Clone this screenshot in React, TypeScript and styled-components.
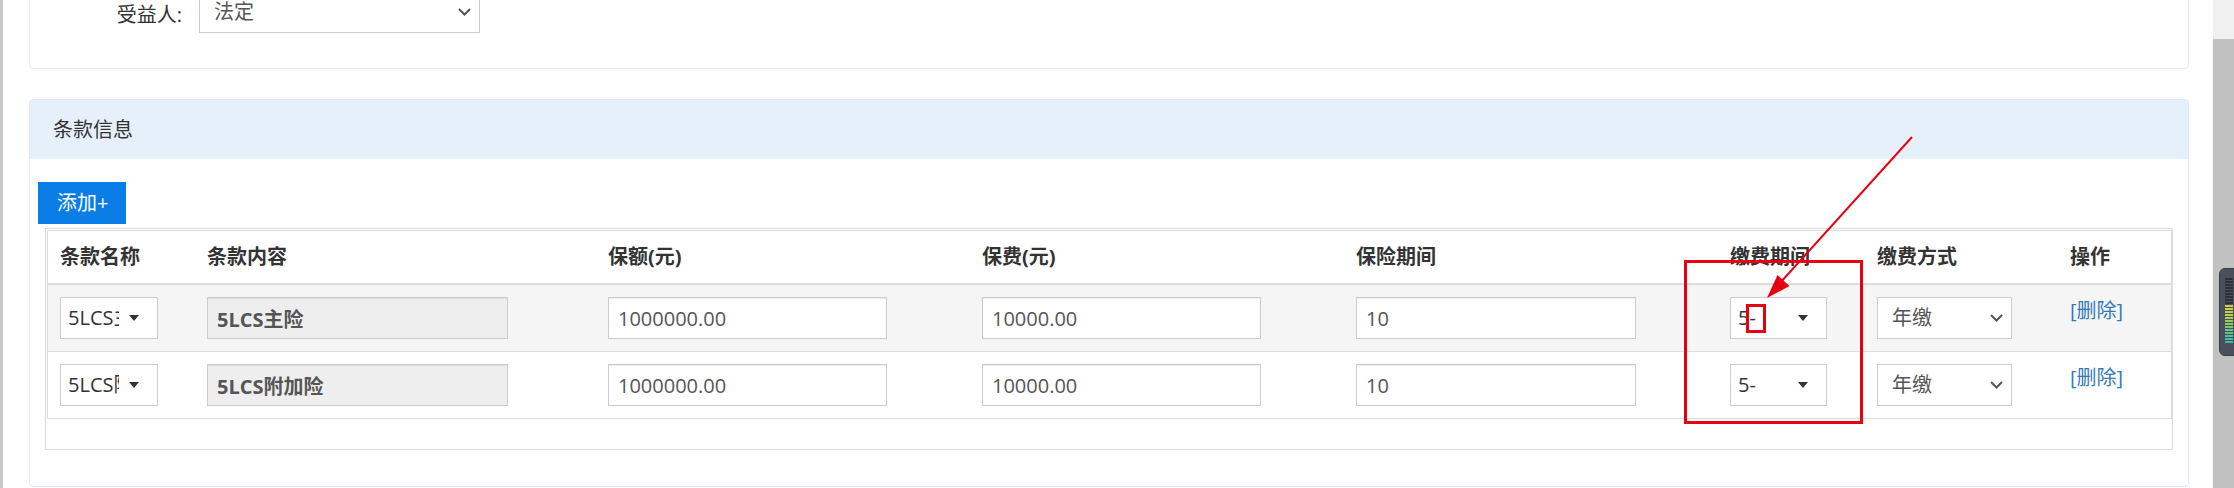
import React from 'react'
import styled, { createGlobalStyle } from 'styled-components'

const GlobalStyle = createGlobalStyle`
  html, body { margin: 0; padding: 0; background: #fff; }
  body {
    font-family: "Open Sans", "Noto Sans CJK SC", sans-serif;
    font-size: 20px;
    line-height: 28px;
    color: #333;
  }
  * { box-sizing: border-box; }
`

const Screen = styled.div`
  position: relative;
  display: flex;
  width: 2234px;
  height: 488px;
  overflow: hidden;
  background: #fff;
`

const LeftEdge = styled.div`
  flex: 0 0 3px;
  background: #c8c8c8;
`

const Main = styled.main`
  flex: 1;
  display: flex;
  flex-direction: column;
  gap: 30px;
  padding: 0 24px 0 26px;
`

const Card = styled.section`
  border: 1px solid #e1ebf6;
  border-radius: 4px;
  background: #fff;
`

const FilterCard = styled(Card)`
  margin-top: -20px;
  padding: 10px 0 35px;
`

const FormRow = styled.div`
  display: flex;
  align-items: center;
`

const FormLabel = styled.label`
  width: 152px;
  margin-right: 17px;
  padding-top: 6px;
  text-align: right;
`

const SelectBox = styled.div<{ $w: number }>`
  display: flex;
  align-items: center;
  width: ${(p) => p.$w}px;
  height: 42px;
  padding: 0 8px 0 14px;
  border: 1px solid #ccc;
  background: #fff;
  color: #555;
`

const SelectText = styled.span`
  flex: 1;
`

const CardHeader = styled.header`
  display: flex;
  align-items: center;
  height: 59px;
  padding-left: 23px;
  background: #e6f0fa;
  border-radius: 3px 3px 0 0;
`

const CardBody = styled.div`
  padding: 23px 15px 36px 8px;
`

const AddButton = styled.button`
  display: block;
  width: 88px;
  height: 42px;
  padding: 0 0 0 19px;
  border: none;
  background: #0a7ce6;
  color: #fff;
  font: inherit;
  text-align: left;
`

const TableFrame = styled.div`
  margin: 4px 0 0 7px;
  padding: 1px 0 30px 1px;
  border: 1px solid #dcdcdc;
`

const Table = styled.div`
  border: 1px solid #dddddd;
  border-bottom: none;
`

const GridRow = styled.div<{ $head?: boolean; $shaded?: boolean }>`
  display: grid;
  grid-template-columns: 147px 401px 374px 374px 374px 147px 193px 1fr;
  align-items: ${(p) => (p.$head ? 'center' : 'start')};
  height: ${(p) => (p.$head ? '54px' : 'auto')};
  background: ${(p) => (p.$shaded ? '#f5f5f5' : '#fff')};
  border-bottom: ${(p) => (p.$head ? '2px' : '1px')} solid #dddddd;
`

const HeadCell = styled.div`
  padding: 0 12px;
  font-weight: 700;
  color: #333;
`

const Cell = styled.div`
  padding: 12px;
`

const TextBox = styled.input<{ $w: number; $locked?: boolean }>`
  display: block;
  width: ${(p) => p.$w}px;
  height: 42px;
  padding: 0 9px;
  border: 1px solid #ccc;
  outline: none;
  background: ${(p) => (p.$locked ? '#eeeeee' : '#fff')};
  box-shadow: inset 0 1px 1px rgba(0, 0, 0, 0.075);
  font: inherit;
  font-weight: ${(p) => (p.$locked ? 700 : 400)};
  color: #555;
`

const Dropdown = styled.div<{ $w: number }>`
  display: flex;
  align-items: center;
  width: ${(p) => p.$w}px;
  height: 42px;
  padding: 0 18px 0 7px;
  border: 1px solid #ccc;
  background: #fff;
  color: #333;
`

const DropdownText = styled.span`
  flex: 1;
  min-width: 0;
  overflow: hidden;
  white-space: nowrap;
`

const Caret = styled.span`
  flex: 0 0 auto;
  margin-left: 10px;
  width: 0;
  height: 0;
  border-left: 5px solid transparent;
  border-right: 5px solid transparent;
  border-top: 6px solid #333;
`

const DeleteLink = styled.a`
  color: #337ab7;
  text-decoration: none;
  cursor: pointer;
`

const ScrollRail = styled.aside`
  flex: 0 0 21px;
  display: flex;
  flex-direction: column;
  background: #c1c1c1;
`

const ScrollCap = styled.div`
  height: 39px;
  background: #f0f0f0;
`

const Meter = styled.div`
  position: absolute;
  left: 2219px;
  top: 268px;
  width: 22px;
  height: 88px;
  display: flex;
  flex-direction: column;
  gap: 1px;
  padding: 9px 0 0 5px;
  background: #4a4f5b;
  border: 1px solid #3a3e47;
  border-radius: 6px;
`

const MeterBar = styled.span<{ $c: string }>`
  width: 8px;
  height: 2px;
  background: ${(p) => p.$c};
`

const Annotation = styled.svg`
  position: absolute;
  left: 0;
  top: 0;
  pointer-events: none;
`

const Chevron = () => (
  <svg width="13" height="8" viewBox="0 0 13 8">
    <polyline points="1,1 6.5,6.5 12,1" fill="none" stroke="#555" strokeWidth="2" />
  </svg>
)

const heads = ['条款名称', '条款内容', '保额(元)', '保费(元)', '保险期间', '缴费期间', '缴费方式', '操作']

const rows = [
  { code: '5LCS主险', amount: '1000000.00', premium: '10000.00', term: '10', payTerm: '5-', payMode: '年缴' },
  { code: '5LCS附加险', amount: '1000000.00', premium: '10000.00', term: '10', payTerm: '5-', payMode: '年缴' },
]

const meterColors = [
  ...Array(9).fill('#2c3038'),
  '#d2cf3a', '#cdd03e', '#c4d044', '#b8d04a', '#a9cf52',
  '#98ce5c', '#86cd68', '#74cb76', '#63c884', '#55c492', '#49c09c', '#40bca4', '#3ab8a8',
]

export default function App() {
  return (
    <Screen>
      <GlobalStyle />
      <LeftEdge />
      <Main>
        <FilterCard>
          <FormRow>
            <FormLabel>受益人:</FormLabel>
            <SelectBox $w={281}>
              <SelectText>法定</SelectText>
              <Chevron />
            </SelectBox>
          </FormRow>
        </FilterCard>

        <Card>
          <CardHeader>条款信息</CardHeader>
          <CardBody>
            <AddButton>添加+</AddButton>
            <TableFrame>
              <Table>
                <GridRow $head>
                  {heads.map((h) => (
                    <HeadCell key={h}>{h}</HeadCell>
                  ))}
                </GridRow>
                {rows.map((r, i) => (
                  <GridRow key={r.code} $shaded={i === 0}>
                    <Cell>
                      <Dropdown $w={98}>
                        <DropdownText>{r.code}</DropdownText>
                        <Caret />
                      </Dropdown>
                    </Cell>
                    <Cell>
                      <TextBox $w={301} $locked readOnly value={r.code} />
                    </Cell>
                    <Cell>
                      <TextBox $w={279} readOnly value={r.amount} />
                    </Cell>
                    <Cell>
                      <TextBox $w={279} readOnly value={r.premium} />
                    </Cell>
                    <Cell>
                      <TextBox $w={280} readOnly value={r.term} />
                    </Cell>
                    <Cell>
                      <Dropdown $w={97}>
                        <DropdownText>{r.payTerm}</DropdownText>
                        <Caret />
                      </Dropdown>
                    </Cell>
                    <Cell>
                      <SelectBox $w={135}>
                        <SelectText>{r.payMode}</SelectText>
                        <Chevron />
                      </SelectBox>
                    </Cell>
                    <Cell>
                      <DeleteLink>[删除]</DeleteLink>
                    </Cell>
                  </GridRow>
                ))}
              </Table>
            </TableFrame>
          </CardBody>
        </Card>
      </Main>
      <ScrollRail>
        <ScrollCap />
      </ScrollRail>

      <Meter>
        {meterColors.map((c, i) => (
          <MeterBar key={i} $c={c} />
        ))}
      </Meter>

      {/* red markup drawn on top of the screenshot */}
      <Annotation width="2234" height="488" viewBox="0 0 2234 488">
        <rect x="1685.5" y="261.5" width="176" height="161" fill="none" stroke="#e60012" strokeWidth="3" />
        <rect x="1747.5" y="305.5" width="17" height="26" fill="none" stroke="#e60012" strokeWidth="3" />
        <line x1="1912" y1="137" x2="1780" y2="283" stroke="#e60012" strokeWidth="2" />
        <polygon points="1767,298 1789.5,286 1777.5,275" fill="#e60012" />
      </Annotation>
    </Screen>
  )
}
